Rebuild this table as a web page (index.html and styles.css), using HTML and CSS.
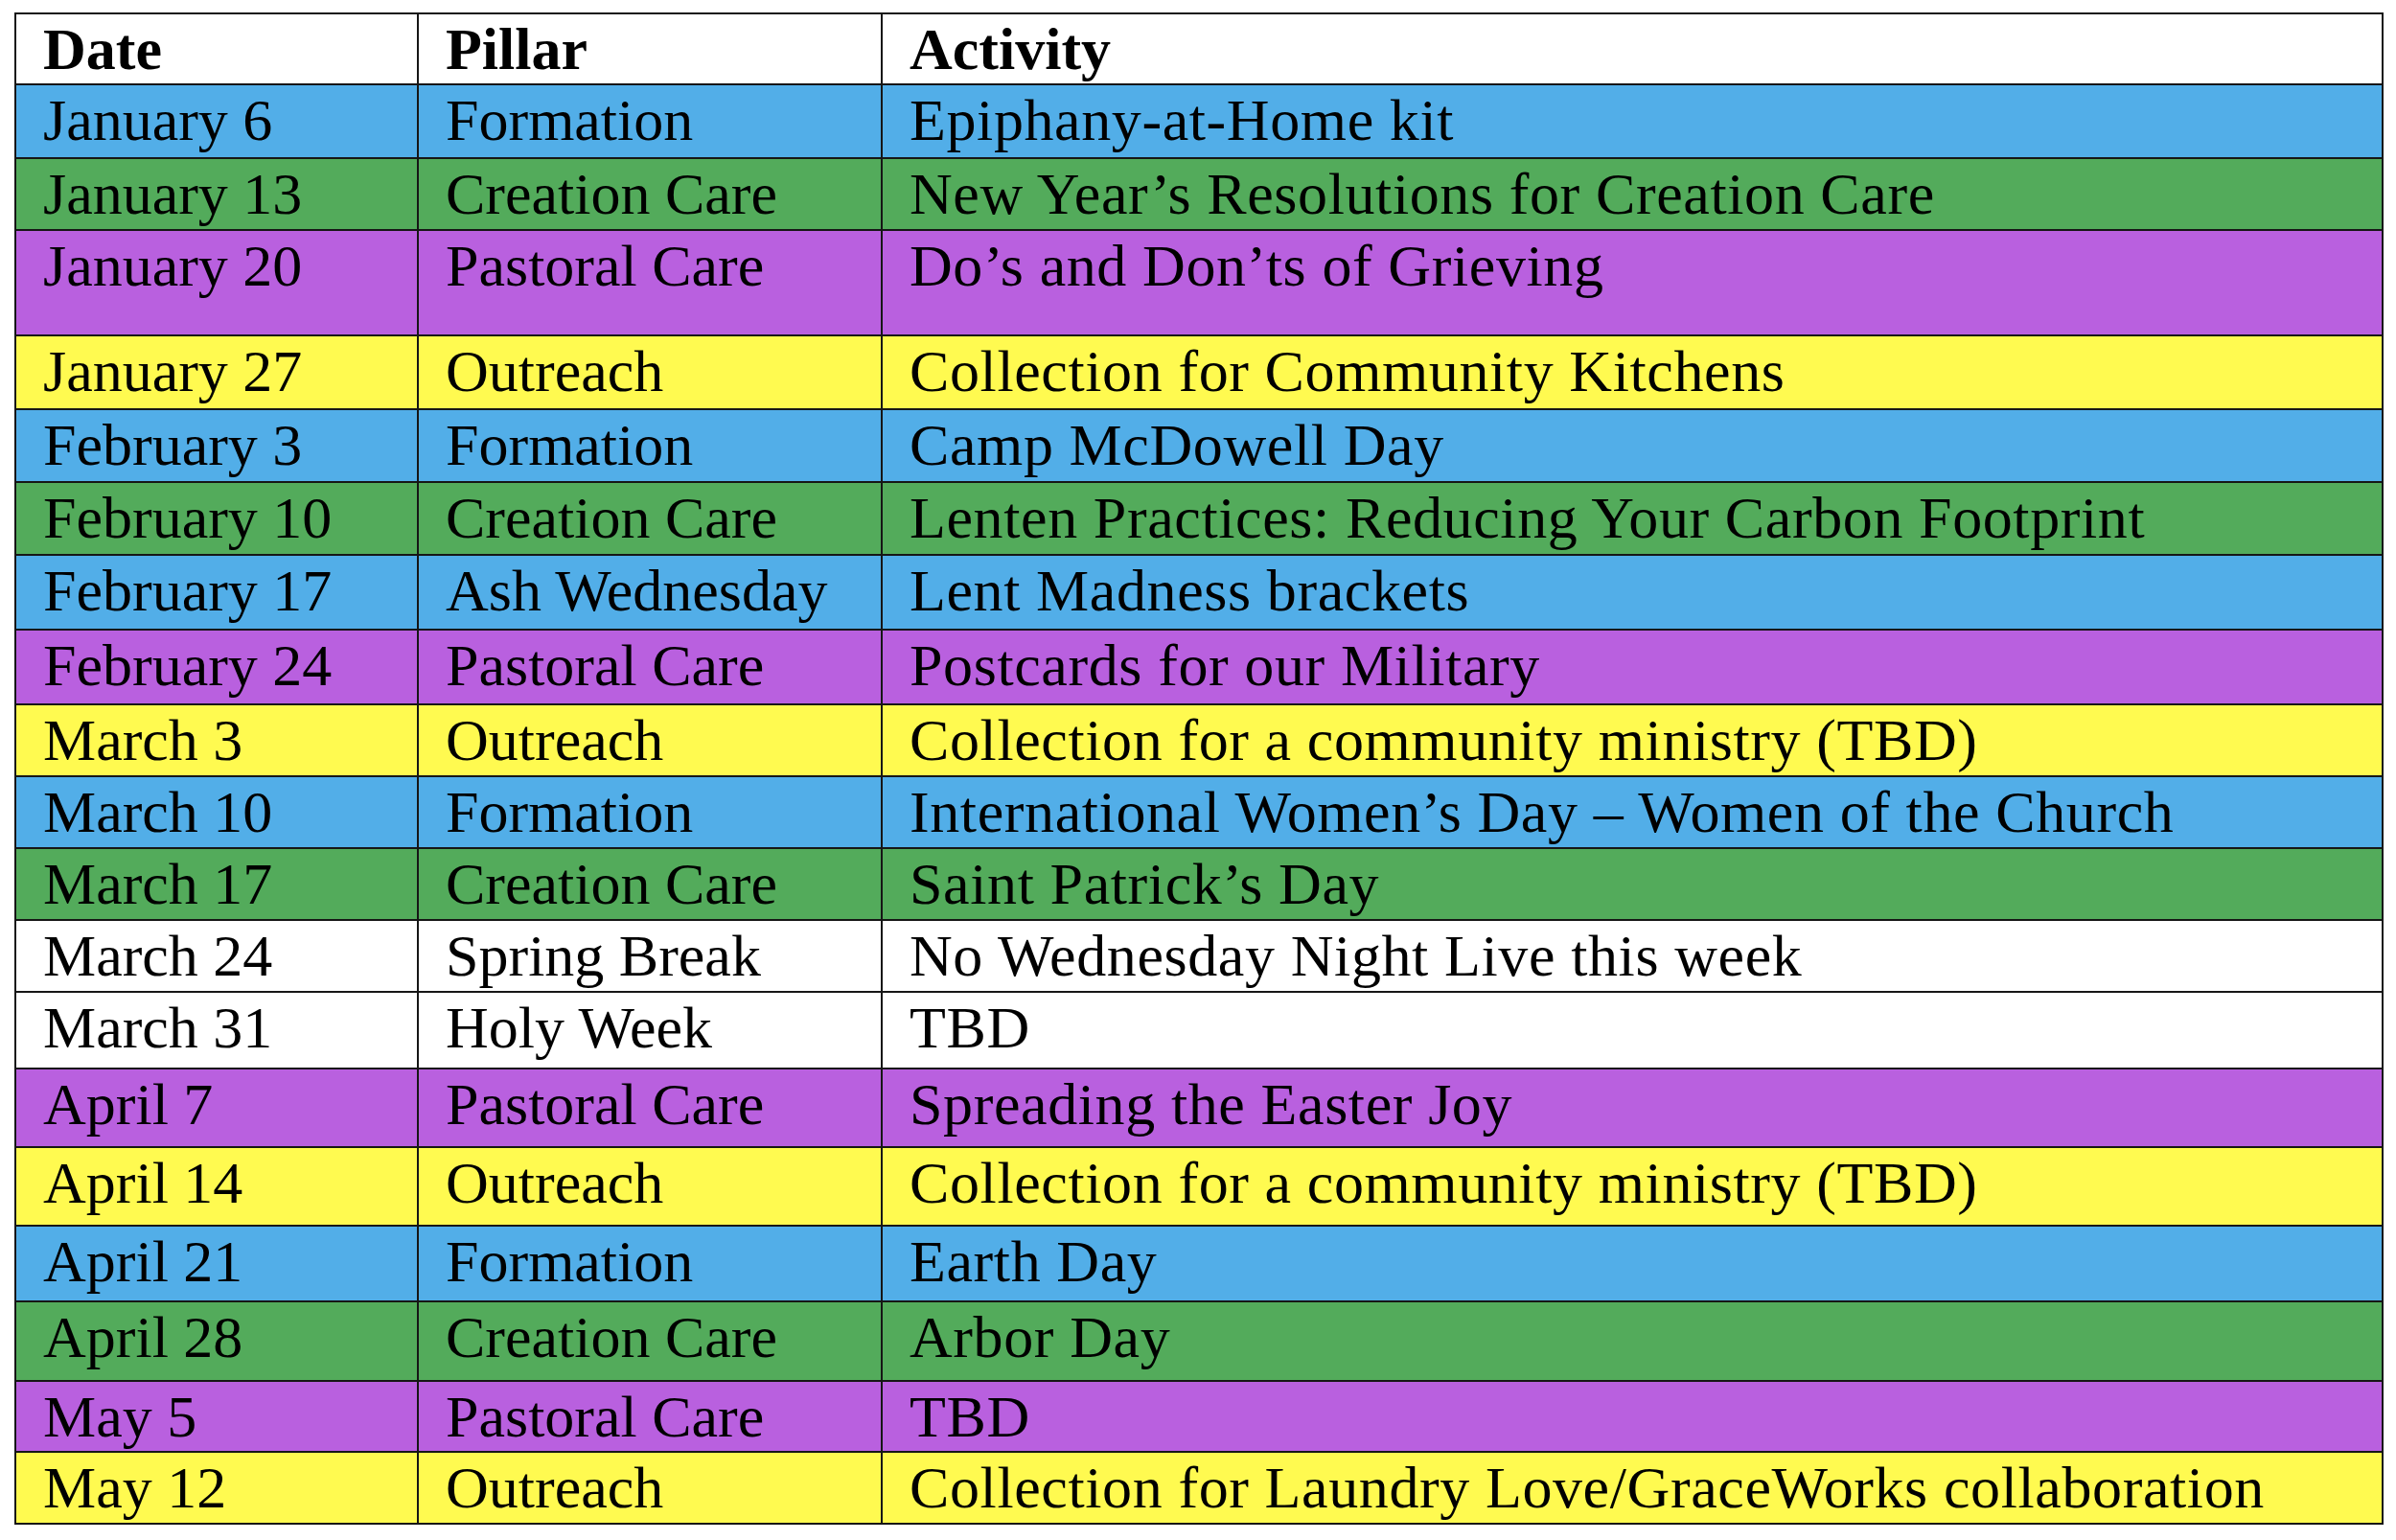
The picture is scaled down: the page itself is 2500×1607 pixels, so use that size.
FILE: index.html
```html
<!DOCTYPE html>
<html lang="en">
<head>
<meta charset="utf-8">
<title>Schedule</title>
<link rel="stylesheet" href="styles.css">
</head>
<body>
<table class="sched">
  <colgroup>
    <col class="c-date">
    <col class="c-pillar">
    <col class="c-act">
  </colgroup>
  <thead>
    <tr class="h73 white"><th>Date</th><th>Pillar</th><th>Activity</th></tr>
  </thead>
  <tbody>
    <tr class="h77 blue"><td>January 6</td><td>Formation</td><td>Epiphany-at-Home kit</td></tr>
    <tr class="h75 green"><td>January 13</td><td>Creation Care</td><td>New Year’s Resolutions for Creation Care</td></tr>
    <tr class="h110 purple"><td>January 20</td><td>Pastoral Care</td><td>Do’s and Don’ts of Grieving</td></tr>
    <tr class="h77 yellow"><td>January 27</td><td>Outreach</td><td>Collection for Community Kitchens</td></tr>
    <tr class="h76 blue"><td>February 3</td><td>Formation</td><td>Camp McDowell Day</td></tr>
    <tr class="h76 green"><td>February 10</td><td>Creation Care</td><td>Lenten Practices: Reducing Your Carbon Footprint</td></tr>
    <tr class="h78 blue"><td>February 17</td><td>Ash Wednesday</td><td>Lent Madness brackets</td></tr>
    <tr class="h78 purple"><td>February 24</td><td>Pastoral Care</td><td>Postcards for our Military</td></tr>
    <tr class="h75 yellow"><td>March 3</td><td>Outreach</td><td>Collection for a community ministry (TBD)</td></tr>
    <tr class="h75 blue"><td>March 10</td><td>Formation</td><td>International Women’s Day – Women of the Church</td></tr>
    <tr class="h75 green"><td>March 17</td><td>Creation Care</td><td>Saint Patrick’s Day</td></tr>
    <tr class="h75 white"><td>March 24</td><td>Spring Break</td><td>No Wednesday Night Live this week</td></tr>
    <tr class="h80 white"><td>March 31</td><td>Holy Week</td><td>TBD</td></tr>
    <tr class="h82 purple"><td>April 7</td><td>Pastoral Care</td><td>Spreading the Easter Joy</td></tr>
    <tr class="h82 yellow"><td>April 14</td><td>Outreach</td><td>Collection for a community ministry (TBD)</td></tr>
    <tr class="h79 blue"><td>April 21</td><td>Formation</td><td>Earth Day</td></tr>
    <tr class="h83 green"><td>April 28</td><td>Creation Care</td><td>Arbor Day</td></tr>
    <tr class="h74 purple"><td>May 5</td><td>Pastoral Care</td><td>TBD</td></tr>
    <tr class="h75 yellow"><td>May 12</td><td>Outreach</td><td>Collection for Laundry Love/GraceWorks collaboration</td></tr>
  </tbody>
</table>
</body>
</html>
```
FILE: styles.css
```css
html, body {
  margin: 0;
  background: #ffffff;
}
body {
  padding: 13px 0 0 15px;
  font-family: "Liberation Serif", "Times New Roman", serif;
  color: #000;
}
.sched {
  border-collapse: collapse;
  table-layout: fixed;
  width: 2472px;
  font-size: 62px;
  line-height: normal;
  border: 2px solid #161616;
}
.c-date { width: 420px; }
.c-pillar { width: 484px; }
.c-act { width: 1566px; }
.sched th,
.sched td {
  border: 2px solid #161616;
  padding: 1px 0 0 28px;
  vertical-align: top;
  text-align: left;
  white-space: nowrap;
  overflow: hidden;
}
.sched td:last-child { letter-spacing: 0.6px; }
.sched th { font-weight: bold; }
.white { background: #ffffff; }
.blue { background: #52aee8; }
.green { background: #53ab5b; }
.purple { background: #b960df; }
.yellow { background: #fffa50; }
.h73 { height: 73px; }
.h74 { height: 74px; }
.h75 { height: 75px; }
.h76 { height: 76px; }
.h77 { height: 77px; }
.h78 { height: 78px; }
.h79 { height: 79px; }
.h80 { height: 80px; }
.h82 { height: 82px; }
.h83 { height: 83px; }
.h110 { height: 110px; }
```
